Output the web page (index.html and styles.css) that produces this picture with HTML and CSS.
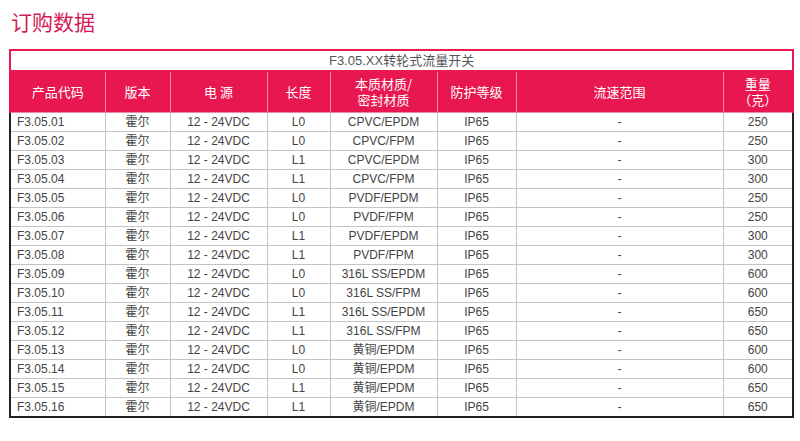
FILE: index.html
```html
<!DOCTYPE html>
<html lang="zh">
<head>
<meta charset="utf-8">
<link rel="stylesheet" href="styles.css">
</head>
<body>
<h1 class="page-title">订购数据</h1>
<table class="order">
  <colgroup>
    <col class="c1"><col class="c2"><col class="c3"><col class="c4"><col class="c5"><col class="c6"><col class="c7"><col class="c8">
  </colgroup>
  <thead>
    <tr class="cap"><td colspan="8">F3.05.XX转轮式流量开关</td></tr>
    <tr class="head">
      <th>产品代码</th><th>版本</th><th>电 源</th><th>长度</th><th><span class="ln">本质材质/</span><span class="ln">密封材质</span></th><th>防护等级</th><th>流速范围</th><th><span class="ln">重量</span><span class="ln">（克）</span></th>
    </tr>
  </thead>
  <tbody>
    <tr><td>F3.05.01</td><td>霍尔</td><td>12 - 24VDC</td><td>L0</td><td>CPVC/EPDM</td><td>IP65</td><td>-</td><td>250</td></tr>
    <tr><td>F3.05.02</td><td>霍尔</td><td>12 - 24VDC</td><td>L0</td><td>CPVC/FPM</td><td>IP65</td><td>-</td><td>250</td></tr>
    <tr><td>F3.05.03</td><td>霍尔</td><td>12 - 24VDC</td><td>L1</td><td>CPVC/EPDM</td><td>IP65</td><td>-</td><td>300</td></tr>
    <tr><td>F3.05.04</td><td>霍尔</td><td>12 - 24VDC</td><td>L1</td><td>CPVC/FPM</td><td>IP65</td><td>-</td><td>300</td></tr>
    <tr><td>F3.05.05</td><td>霍尔</td><td>12 - 24VDC</td><td>L0</td><td>PVDF/EPDM</td><td>IP65</td><td>-</td><td>250</td></tr>
    <tr><td>F3.05.06</td><td>霍尔</td><td>12 - 24VDC</td><td>L0</td><td>PVDF/FPM</td><td>IP65</td><td>-</td><td>250</td></tr>
    <tr><td>F3.05.07</td><td>霍尔</td><td>12 - 24VDC</td><td>L1</td><td>PVDF/EPDM</td><td>IP65</td><td>-</td><td>300</td></tr>
    <tr><td>F3.05.08</td><td>霍尔</td><td>12 - 24VDC</td><td>L1</td><td>PVDF/FPM</td><td>IP65</td><td>-</td><td>300</td></tr>
    <tr><td>F3.05.09</td><td>霍尔</td><td>12 - 24VDC</td><td>L0</td><td>316L SS/EPDM</td><td>IP65</td><td>-</td><td>600</td></tr>
    <tr><td>F3.05.10</td><td>霍尔</td><td>12 - 24VDC</td><td>L0</td><td>316L SS/FPM</td><td>IP65</td><td>-</td><td>600</td></tr>
    <tr><td>F3.05.11</td><td>霍尔</td><td>12 - 24VDC</td><td>L1</td><td>316L SS/EPDM</td><td>IP65</td><td>-</td><td>650</td></tr>
    <tr><td>F3.05.12</td><td>霍尔</td><td>12 - 24VDC</td><td>L1</td><td>316L SS/FPM</td><td>IP65</td><td>-</td><td>650</td></tr>
    <tr><td>F3.05.13</td><td>霍尔</td><td>12 - 24VDC</td><td>L0</td><td>黄铜/EPDM</td><td>IP65</td><td>-</td><td>600</td></tr>
    <tr><td>F3.05.14</td><td>霍尔</td><td>12 - 24VDC</td><td>L0</td><td>黄铜/EPDM</td><td>IP65</td><td>-</td><td>600</td></tr>
    <tr><td>F3.05.15</td><td>霍尔</td><td>12 - 24VDC</td><td>L1</td><td>黄铜/EPDM</td><td>IP65</td><td>-</td><td>650</td></tr>
    <tr><td>F3.05.16</td><td>霍尔</td><td>12 - 24VDC</td><td>L1</td><td>黄铜/EPDM</td><td>IP65</td><td>-</td><td>650</td></tr>
  </tbody>
</table>
</body>
</html>
```
FILE: styles.css
```css
html, body {
  margin: 0;
  padding: 0;
  background: #fff;
}
body {
  font-family: "Liberation Sans", "Noto Sans CJK SC", sans-serif;
  color: #333;
  padding: 10px 0 0 9px;
}
.page-title {
  margin: 0 0 16px 2px;
  font-family: "Noto Sans CJK SC", sans-serif;
  font-weight: 400;
  font-size: 21px;
  line-height: 23px;
  color: #d41a55;
}
.order {
  border-collapse: collapse;
  table-layout: fixed;
  width: 783px;
  font-size: 12px;
}
.c1 { width: 95px; }
.c2 { width: 65px; }
.c3 { width: 97px; }
.c4 { width: 63px; }
.c5 { width: 107px; }
.c6 { width: 79px; }
.c7 { width: 207px; }
.c8 { width: 70px; }

.cap td {
  height: 19px;
  padding: 0;
  border: 2px solid #e81a52;
  text-align: center;
  font-size: 13px;
  color: #555;
  line-height: 19px;
}
.head th {
  height: 40px;
  padding: 0;
  background: #e8174f;
  color: #fff;
  font-family: "Noto Sans CJK SC", sans-serif;
  font-weight: 400;
  font-size: 13px;
  line-height: 16px;
  border: 1px solid #ef8aa3;
  border-top: 0;
}
.head th .ln {
  display: block;
  height: 16px;
  overflow: visible;
}
.head th:first-child { border-left: 2px solid #e8174f; }
.head th:last-child { border-right: 2px solid #e8174f; }

tbody td {
  height: 18px;
  padding: 0;
  border: 1px solid #c4c4c4;
  text-align: center;
  line-height: 18px;
  color: #444;
  white-space: nowrap;
}
tbody td:first-child {
  text-align: left;
  padding-left: 6px;
  border-left: 2px solid #222;
}
tbody td:last-child { border-right: 2px solid #222; }
tbody tr:last-child td { border-bottom: 2px solid #222; }
```
